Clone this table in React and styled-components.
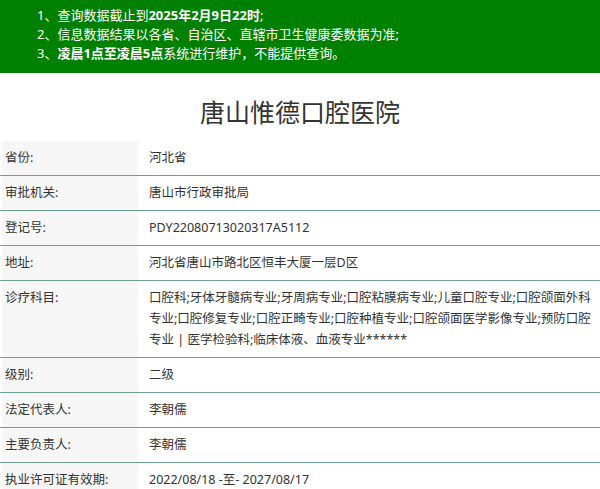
import styled, { createGlobalStyle } from "styled-components";

const GlobalStyle = createGlobalStyle`
  body {
    margin: 0;
    background: #fff;
    font-family: "Segoe UI", "Noto Sans", "Noto Sans CJK SC", sans-serif;
    color: #333;
  }
`;

const rows = [
  { label: "省份:", value: "河北省" },
  { label: "审批机关:", value: "唐山市行政审批局" },
  { label: "登记号:", value: "PDY22080713020317A5112" },
  { label: "地址:", value: "河北省唐山市路北区恒丰大厦一层D区" },
  {
    label: "诊疗科目:",
    value:
      "口腔科;牙体牙髓病专业;牙周病专业;口腔粘膜病专业;儿童口腔专业;口腔颌面外科专业;口腔修复专业;口腔正畸专业;口腔种植专业;口腔颌面医学影像专业;预防口腔专业 | 医学检验科;临床体液、血液专业******",
  },
  { label: "级别:", value: "二级" },
  { label: "法定代表人:", value: "李朝儒" },
  { label: "主要负责人:", value: "李朝儒" },
  { label: "执业许可证有效期:", value: "2022/08/18 -至- 2027/08/17" },
];

const App = () => {
  return (
    <Page>
      <GlobalStyle />
      <Notice>
        <NoticeLine>
          1、查询数据截止到<b>2025年2月9日22时</b>;
        </NoticeLine>
        <NoticeLine>2、信息数据结果以各省、自治区、直辖市卫生健康委数据为准;</NoticeLine>
        <NoticeLine>
          3、<b>凌晨1点至凌晨5点</b>系统进行维护，不能提供查询。
        </NoticeLine>
      </Notice>
      <Title>唐山惟德口腔医院</Title>
      <InfoTable>
        {rows.map((r, i) => (
          <Row key={r.label} $first={i === 0}>
            <Label>{r.label}</Label>
            <Value>{r.value}</Value>
          </Row>
        ))}
      </InfoTable>
    </Page>
  );
};

const Page = styled.div`
  width: 600px;
  overflow: hidden;
`;

const Notice = styled.div`
  background: #008000;
  color: #fff;
  padding: 6px 0 10px 37px;
  font-size: 13px;
  b {
    font-weight: bold;
  }
`;

const NoticeLine = styled.p`
  margin: 0;
  line-height: 19px;
`;

const Title = styled.h1`
  margin: 0;
  padding: 22px 0 11px;
  height: 35px;
  line-height: 35px;
  text-align: center;
  font-size: 25px;
  font-weight: normal;
  color: #333;
`;

const InfoTable = styled.div`
  display: flex;
  flex-direction: column;
`;

const Row = styled.div`
  display: grid;
  grid-template-columns: 136px 1fr;
  padding-left: 2px;
  border-top: ${(p) => (p.$first ? "none" : "1px solid #6f9f8e")};
  font-size: 12.5px;
  line-height: 21px;
`;

const Label = styled.div`
  background: #f7f7f7;
  padding: 6px 3px 7px;
`;

const Value = styled.div`
  padding: 6px 2px 7px 11px;
`;

export default App;
